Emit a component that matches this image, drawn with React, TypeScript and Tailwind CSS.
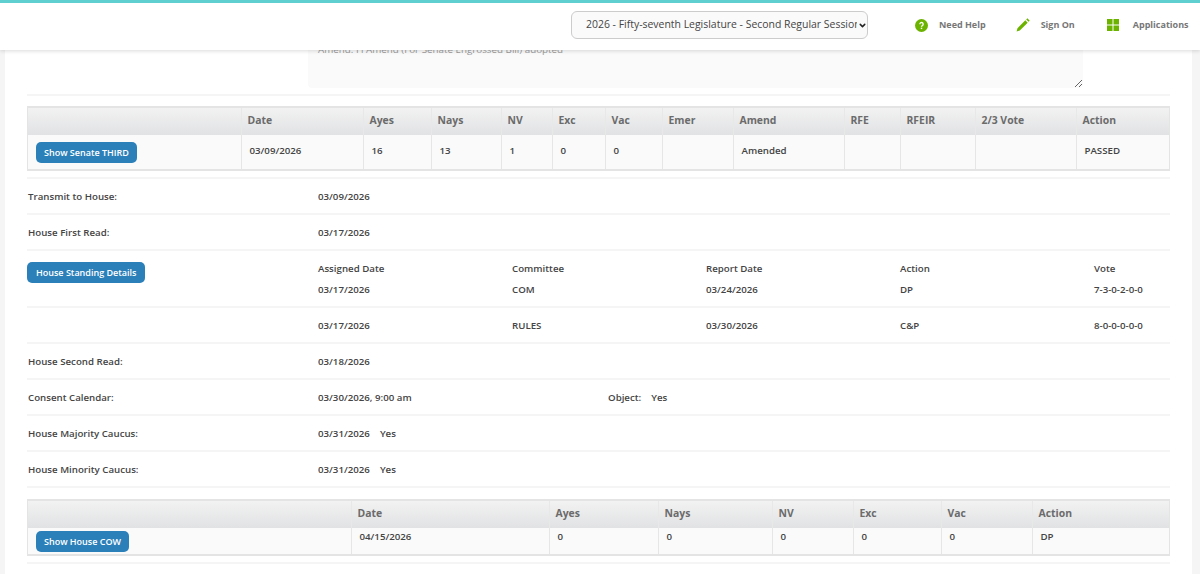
import { ReactNode } from 'react'
import { FiChevronDown } from 'react-icons/fi'

type Column = { label: string; width: number; value?: ReactNode }

const senateColumns: Column[] = [
  { label: '', width: 213, value: <ShowButton title="Show Senate THIRD" /> },
  { label: 'Date', width: 122, value: '03/09/2026' },
  { label: 'Ayes', width: 68, value: '16' },
  { label: 'Nays', width: 70, value: '13' },
  { label: 'NV', width: 51, value: '1' },
  { label: 'Exc', width: 53, value: '0' },
  { label: 'Vac', width: 57, value: '0' },
  { label: 'Emer', width: 71 },
  { label: 'Amend', width: 111, value: 'Amended' },
  { label: 'RFE', width: 56 },
  { label: 'RFEIR', width: 75 },
  { label: '2/3 Vote', width: 101 },
  { label: 'Action', width: 93, value: 'PASSED' },
]

const houseColumns: Column[] = [
  { label: '', width: 323, value: <ShowButton title="Show House COW" /> },
  { label: 'Date', width: 198, value: '04/15/2026' },
  { label: 'Ayes', width: 109, value: '0' },
  { label: 'Nays', width: 114, value: '0' },
  { label: 'NV', width: 81, value: '0' },
  { label: 'Exc', width: 88, value: '0' },
  { label: 'Vac', width: 91, value: '0' },
  { label: 'Action', width: 137, value: 'DP' },
]

function ShowButton({ title }: { title: string }) {
  return (
    <button className="block h-[21px] rounded-[5px] bg-[#2b80b9] px-[8px] text-[9px] font-semibold whitespace-nowrap text-white">
      {title}
    </button>
  )
}

function VoteTable({
  columns,
  rowHeight,
  buttonPad,
  textPad,
}: {
  columns: Column[]
  rowHeight: string
  buttonPad: string
  textPad: string
}) {
  return (
    <div className="border-x border-t-2 border-b-2 border-[#e4e4e4]">
      <table className="w-full table-fixed border-collapse">
        <colgroup>
          {columns.map((column, i) => (
            <col key={i} style={{ width: column.width }} />
          ))}
        </colgroup>
        <thead>
          <tr className="h-[27px] bg-gradient-to-b from-[#f2f2f2] to-[#e1e2e4]">
            {columns.map((column, i) => (
              <th
                key={i}
                className="border-r border-[#e8e8e8] px-[6px] pb-[2px] text-left text-[10.4px] font-bold text-[#6b6b6b] last:border-r-0"
              >
                {column.label}
              </th>
            ))}
          </tr>
        </thead>
        <tbody>
          <tr className={`${rowHeight} bg-[#fafafa]`}>
            {columns.map((column, i) => (
              <td
                key={i}
                className={`border-r border-[#e6e6e6] align-top text-[9.7px] font-semibold text-[#444] last:border-r-0 ${
                  i === 0 ? `pl-[8px] ${buttonPad}` : `pl-[8px] ${textPad}`
                }`}
              >
                {column.value}
              </td>
            ))}
          </tr>
        </tbody>
      </table>
    </div>
  )
}

function DetailRow({ label, children }: { label?: string; children: ReactNode }) {
  return (
    <div className="flex h-9 items-center border-b-2 border-[#f5f5f5] pt-[2px] text-[9.7px] font-semibold text-[#444]">
      <div className="w-[291px] shrink-0 pl-px">{label}</div>
      {children}
    </div>
  )
}

const standingRows = [
  ['03/17/2026', 'COM', '03/24/2026', 'DP', '7-3-0-2-0-0'],
  ['03/17/2026', 'RULES', '03/30/2026', 'C&P', '8-0-0-0-0-0'],
]

const standingHeaders = ['Assigned Date', 'Committee', 'Report Date', 'Action', 'Vote']

function StandingCells({ cells }: { cells: string[] }) {
  return (
    <div className="flex">
      {cells.map((cell, i) => (
        <div key={i} className="w-[194px] last:w-auto">
          {cell}
        </div>
      ))}
    </div>
  )
}

function Header() {
  return (
    <header className="relative z-10 h-[50px] border-t-[3px] border-[#5fd0cf] bg-white shadow-[0_1px_4px_rgba(0,0,0,0.15)]">
      <div className="flex h-full items-center pb-[3px] pl-[571px] text-[9px] font-bold whitespace-nowrap text-[#777]">
        <div className="relative">
          <select
            defaultValue="2026"
            className="block h-[28px] w-[297px] appearance-none rounded-[6px] border border-[#ccc] bg-[#fafafa] pl-[14px] pr-[10px] text-[10.45px] font-normal text-[#444]"
          >
            <option value="2026">2026 - Fifty-seventh Legislature - Second Regular Session</option>
          </select>
          <FiChevronDown size={9} strokeWidth={4} className="absolute right-[1px] top-[10px] bg-[#fafafa] text-[#222]" />
        </div>
        <svg viewBox="0 0 24 24" className="ml-[47px] h-[13px] w-[13px]">
          <circle cx="12" cy="12" r="12" fill="#6cb300" />
          <path d="M9 9.500a3 3 0 1 1 4.800 2.400c-1.200.8-1.800 1.200-1.800 2.300" fill="none" stroke="#fff" strokeWidth="2.400" />
          <rect x="10.700" y="16" width="2.600" height="2.600" fill="#fff" />
        </svg>
        <span className="ml-[11px]">Need Help</span>
        <svg viewBox="0 0 24 24" className="ml-[30px] h-[14px] w-[14px]">
          <path d="M1 23l1.500-5.500L16 4l4 4L6.500 21.500z M17.500 2.500l2-2 4 4-2 2z" fill="#6cb300" />
        </svg>
        <span className="ml-[11px]">Sign On</span>
        <svg viewBox="0 0 12 12" className="ml-[32px] h-[12px] w-[12px]">
          <path d="M0 0h5.500v5.500H0z M6.500 0H12v5.500H6.500z M0 6.500h5.500V12H0z M6.500 6.500H12V12H6.500z" fill="#6cb300" />
        </svg>
        <span className="ml-[14px]">Applications</span>
      </div>
    </header>
  )
}

export default function App() {
  return (
    <div
      className="h-[574px] overflow-hidden bg-[#f5f5f5]"
      style={{ fontFamily: '"Open Sans", sans-serif' }}
    >
      <Header />
      <main className="ml-[5px] mr-[8px] flow-root h-[524px] bg-white px-[22px]">
        <div className="border-b-2 border-[#f5f5f5] pb-[6px] pl-[281px] pr-[87px]">
          <textarea
            readOnly
            defaultValue="Amend: Fl Amend (For Senate Engrossed Bill) adopted"
            className="-mt-[14px] block h-[52px] w-[775px] rounded-b bg-[#fafafa] pl-[10px] pt-[7px] text-[9.8px] text-[#999] outline-none"
          />
        </div>

        <div className="mt-[10px]">
          <VoteTable
            columns={senateColumns}
            rowHeight="h-[34px]"
            buttonPad="pt-[7px]"
            textPad="pt-[9px]"
          />
        </div>

        <div className="mt-[6px] border-t-2 border-[#f5f5f5]">
          <DetailRow label="Transmit to House:">03/09/2026</DetailRow>
          <DetailRow label="House First Read:">03/17/2026</DetailRow>

          <div className="flex h-[57px] border-b-2 border-[#f5f5f5] pt-[11px] text-[9.7px] font-semibold text-[#444]">
            <div className="w-[291px] shrink-0">
              <button className="block h-[21px] rounded-[5px] bg-[#2b80b9] px-[9px] text-[9px] font-semibold whitespace-nowrap text-white">
                House Standing Details
              </button>
            </div>
            <div className="flex flex-col gap-[6px]">
              <StandingCells cells={standingHeaders} />
              <StandingCells cells={standingRows[0]} />
            </div>
          </div>

          <DetailRow>
            <StandingCells cells={standingRows[1]} />
          </DetailRow>
          <DetailRow label="House Second Read:">03/18/2026</DetailRow>
          <DetailRow label="Consent Calendar:">
            <span className="w-[290px]">03/30/2026, 9:00 am</span>
            <span>Object:</span>
            <span className="ml-[10px]">Yes</span>
          </DetailRow>
          <DetailRow label="House Majority Caucus:">
            <span>03/31/2026</span>
            <span className="ml-[10px]">Yes</span>
          </DetailRow>
          <DetailRow label="House Minority Caucus:">
            <span>03/31/2026</span>
            <span className="ml-[10px]">Yes</span>
          </DetailRow>
        </div>

        <div className="mt-[11px]">
          <VoteTable
            columns={houseColumns}
            rowHeight="h-[26px]"
            buttonPad="pt-[3px]"
            textPad="pt-[2px]"
          />
        </div>
        <div className="mt-[6px] border-t-2 border-[#f5f5f5]" />
      </main>
    </div>
  )
}
